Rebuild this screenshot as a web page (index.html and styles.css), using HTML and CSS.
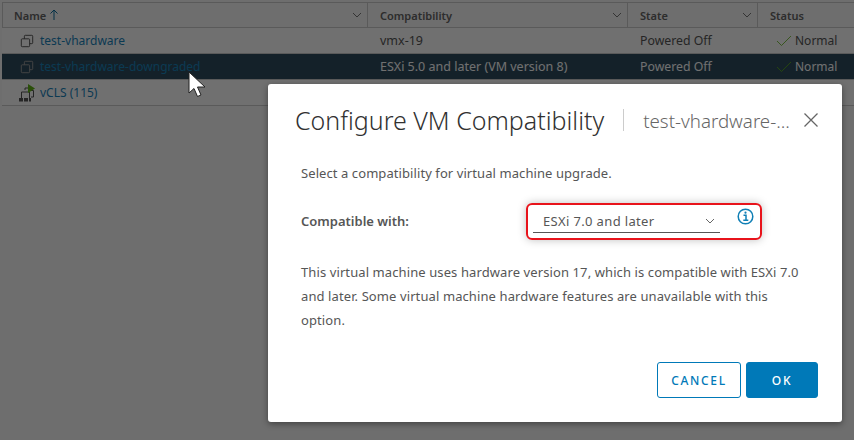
FILE: index.html
```html
<!DOCTYPE html>
<html lang="en">
    <head>
        <meta charset="UTF-8" />
        <title>Configure VM Compatibility</title>
        <link rel="stylesheet" href="styles.css">
    </head>
    <body>
        <div class="grid">
            <div class="row head">
                <div class="cell name">Name <svg class="sort" width="10" height="12" viewBox="0 0 10 12"><path d="M5 11V1M1.5 4.5L5 1l3.5 3.5" fill="none" stroke="#0a6f9f" stroke-width="1"/></svg><svg class="caret" width="10" height="6" viewBox="0 0 10 6"><path d="M1 1l4 4 4-4" fill="none" stroke="#777" stroke-width="1"/></svg></div>
                <div class="cell compat">Compatibility<svg class="caret" width="10" height="6" viewBox="0 0 10 6"><path d="M1 1l4 4 4-4" fill="none" stroke="#777" stroke-width="1"/></svg></div>
                <div class="cell state">State<svg class="caret" width="10" height="6" viewBox="0 0 10 6"><path d="M1 1l4 4 4-4" fill="none" stroke="#777" stroke-width="1"/></svg></div>
                <div class="cell status">Status</div>
            </div>
            <div class="row">
                <div class="cell name">
                    <svg class="vm" width="14" height="14" viewBox="0 0 16 16"><path d="M5 5.500V2.500a1 1 0 0 1 1-1h7.500a1 1 0 0 1 1 1V10a1 1 0 0 1-1 1H11M2.500 5.500h7.500a1 1 0 0 1 1 1V13.500a1 1 0 0 1-1 1H2.500a1 1 0 0 1-1-1V6.500a1 1 0 0 1 1-1z" fill="none" stroke="#555" stroke-width="1.100"/></svg>
                    <a>test-vhardware</a>
                </div>
                <div class="cell compat">vmx-19</div>
                <div class="cell state">Powered Off</div>
                <div class="cell status"><svg class="check" width="16" height="12" viewBox="0 0 16 12"><path d="M1 6l4.500 4.500L15 1" fill="none" stroke="#60b515" stroke-width="0.800"/></svg>Normal</div>
            </div>
            <div class="row selected">
                <div class="cell name">
                    <svg class="vm" width="14" height="14" viewBox="0 0 16 16"><path d="M5 5.500V2.500a1 1 0 0 1 1-1h7.500a1 1 0 0 1 1 1V10a1 1 0 0 1-1 1H11M2.500 5.500h7.500a1 1 0 0 1 1 1V13.500a1 1 0 0 1-1 1H2.500a1 1 0 0 1-1-1V6.500a1 1 0 0 1 1-1z" fill="none" stroke="#9a9a9a" stroke-width="1.100"/></svg>
                    <a>test-vhardware-downgraded</a>
                </div>
                <div class="cell compat">ESXi 5.0 and later (VM version 8)</div>
                <div class="cell state">Powered Off</div>
                <div class="cell status"><svg class="check" width="16" height="12" viewBox="0 0 16 12"><path d="M1 6l4.500 4.500L15 1" fill="none" stroke="#60b515" stroke-width="0.800"/></svg>Normal</div>
            </div>
            <div class="row">
                <div class="cell name">
                    <svg class="cluster" width="16" height="18" viewBox="0 0 16 18"><path d="M6 6V4h4M12 6.500h2.500V13H12M2.500 14v-6h8v6" fill="none" stroke="#555" stroke-width="1"/><path d="M9 0l7 4.500L9 9z" fill="#60b515"/><path d="M0 14h4v3.500H0zM5 14h4v3.500H5zM10 14h2v3.500h-2z" fill="#555"/></svg>
                    <a>vCLS (115)</a>
                </div>
                <div class="cell compat"></div>
                <div class="cell state"></div>
                <div class="cell status"></div>
            </div>
        </div>

        <div class="backdrop"></div>

        <svg class="cursor" width="20" height="28" viewBox="0 0 20 28"><path d="M1 1v21l5-4.500 3.500 8 3.500-1.500-3.500-8H17z" fill="#fff" stroke="#222" stroke-width="1"/></svg>

        <div class="modal">
            <div class="modal-head">
                <h3>Configure VM Compatibility</h3>
                <span class="subtitle">test-vhardware-...</span>
                <svg class="close" width="16" height="16" viewBox="0 0 16 16"><path d="M1.500 1.500l13 13M14.500 1.500l-13 13" fill="none" stroke="#666" stroke-width="1.300"/></svg>
            </div>
            <div class="modal-body">
                <p class="intro">Select a compatibility for virtual machine upgrade.</p>
                <div class="field">
                    <label>Compatible with:</label>
                    <div class="picker">
                        <div class="select">ESXi 7.0 and later<svg width="10" height="6" viewBox="0 0 10 6"><path d="M1 1l4 4 4-4" fill="none" stroke="#666" stroke-width="1"/></svg></div>
                        <svg class="info" width="17" height="17" viewBox="0 0 17 17"><circle cx="8.500" cy="8.500" r="7.300" fill="none" stroke="#0f7fb5" stroke-width="1.500"/><path d="M6.500 7.300h2.500v4.700M6.300 12.300h5" fill="none" stroke="#0f7fb5" stroke-width="1.500"/><circle cx="8.500" cy="4.700" r="1.100" fill="#0f7fb5"/></svg>
                    </div>
                </div>
                <p class="note">This virtual machine uses hardware version 17, which is compatible with ESXi 7.0 and later. Some virtual machine hardware features are unavailable with this option.</p>
            </div>
            <div class="modal-foot">
                <button class="btn outline">CANCEL</button>
                <button class="btn primary">OK</button>
            </div>
        </div>
    </body>
</html>
```

FILE: styles.css
```css
html,
body {
    margin: 0;
    padding: 0;
    height: 440px;
    overflow: hidden;
}
body {
    position: relative;
    background: #fafafa;
    font-family: "Noto Sans", Arial, sans-serif;
    font-size: 13px;
    color: #565656;
}
.grid {
    padding: 2px 0 0 2px;
}
.row {
    display: grid;
    grid-template-columns: 366px 260px 130px 1fr;
    height: 25px;
    border-bottom: 1px solid #ccc;
    background: #fff;
}
.row .cell {
    display: flex;
    align-items: center;
    padding-left: 12px;
    white-space: nowrap;
}
.name {
    font-size: 12px;
}
.compat {
    font-size: 12.5px;
}
.state {
    font-size: 12.3px;
}
.status {
    font-size: 12px;
}
.head {
    height: 24px;
    border-top: 1px solid #ccc;
    background: #fafafa;
    font-weight: 600;
    color: #666;
}
.head .cell {
    font-size: 11px;
    border-right: 1px solid #ccc;
    padding-right: 5px;
}
.head .cell:first-child {
    border-left: 1px solid #ccc;
    padding-left: 11px;
}
.head .status {
    border-right: none;
}
.sort {
    margin-left: 3px;
}
.caret {
    margin-left: auto;
}
.selected {
    background: #2f4d5f;
    color: #fff;
}
.selected a {
    color: #4a90c0;
}
.name a {
    color: #1a84bc;
}
.vm {
    margin: 0 6px 0 6px;
    flex: none;
}
.cluster {
    margin: 0 5px 0 5px;
    flex: none;
}
.check {
    margin: 0 3px 0 6px;
}
.backdrop {
    position: absolute;
    inset: 0;
    background: rgba(0, 0, 0, 0.56);
}
.cursor {
    position: absolute;
    left: 188px;
    top: 71px;
}
.modal {
    position: absolute;
    left: 268px;
    top: 84px;
    width: 574px;
    height: 338px;
    box-sizing: border-box;
    background: #fff;
    border-radius: 3px;
    box-shadow: 0 2px 6px rgba(0, 0, 0, 0.4);
    padding: 0 23px 0 27px;
    display: flex;
    flex-direction: column;
}
.modal-head {
    display: flex;
    align-items: center;
    height: 72px;
}
.modal-head h3 {
    margin: 0;
    font-weight: 300;
    font-size: 25px;
    color: #313131;
    padding-right: 19px;
    border-right: 1px solid #ccc;
    line-height: 22px;
}
.subtitle {
    font-size: 18.700px;
    font-weight: 300;
    color: #666;
    margin-left: 19px;
    white-space: nowrap;
}
.close {
    margin-left: auto;
}
.modal-body {
    padding: 7px 0 0 6px;
    flex: 1;
}
.intro {
    margin: 0;
    font-size: 13px;
    line-height: 20px;
    letter-spacing: 0.08px;
}
.field {
    display: flex;
    align-items: center;
    margin-top: 19px;
    height: 38px;
}
.field label {
    width: 225px;
    font-weight: 600;
    font-size: 13px;
}
.picker {
    display: flex;
    align-items: flex-start;
    gap: 17px;
    width: 236px;
    height: 37px;
    box-sizing: border-box;
    padding: 6px 0 0 5px;
    border: 2px solid #e8131b;
    border-radius: 6px;
    box-shadow: 0 0 8px rgba(0, 0, 0, 0.25);
}
.select {
    display: flex;
    align-items: center;
    justify-content: space-between;
    width: 187px;
    height: 22px;
    box-sizing: border-box;
    padding: 0 5px 0 10px;
    border-bottom: 1px solid #565656;
    letter-spacing: 0.35px;
    white-space: nowrap;
    flex: none;
}
.info {
    margin-top: -3px;
    flex: none;
}
.note {
    margin: 20px 0 0;
    font-size: 13px;
    line-height: 24px;
    letter-spacing: 0.1px;
    width: 505px;
}
.modal-foot {
    display: flex;
    justify-content: flex-end;
    gap: 5px;
    padding-bottom: 24px;
    padding-right: 1px;
}
.btn {
    height: 36px;
    border-radius: 3px;
    font-family: "Noto Sans", Arial, sans-serif;
    font-size: 12px;
    font-weight: 500;
    letter-spacing: 1.7px;
}
.outline {
    width: 84px;
    background: #fff;
    border: 1px solid #0079b8;
    color: #0079b8;
}
.primary {
    width: 72px;
    background: #0079b8;
    border: 1px solid #0079b8;
    color: #fff;
}
```
